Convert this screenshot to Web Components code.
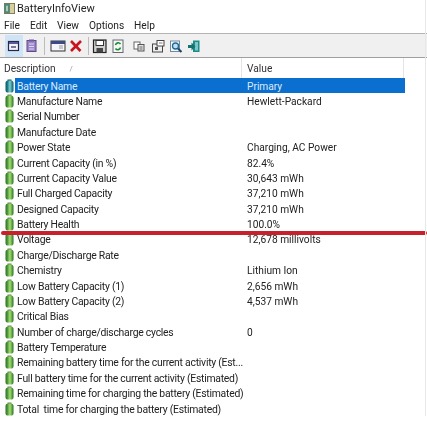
<!DOCTYPE html>
<html><head><meta charset="utf-8"><style>
html,body{margin:0;padding:0;background:#fff}
body{width:427px;height:423px;overflow:hidden;font-family:Roboto,"Noto Sans",sans-serif;font-size:10px;color:#222}
</style></head><body>
<app-window></app-window>
<script>
const svgIcons={
 view1:'<rect x="2.5" y="3.5" width="10" height="9" fill="#f2f2fa" stroke="#26264e" stroke-width="1.2"/><rect x="3" y="4" width="9" height="2" fill="#5a5a98"/><path d="M5 9h5" stroke="#26264e" stroke-width="1.2"/>',
 view2:'<rect x="3" y="2.5" width="9" height="11" fill="#9a86c8" stroke="#5b4a8c"/><path d="M5 6h5M5 8.5h5M5 11h5" stroke="#e0d8f0"/><rect x="5" y="1.5" width="5" height="2" fill="#6c5a9e"/>',
 win:'<rect x="1" y="3" width="14" height="10" fill="#f4f4fa" stroke="#333"/><rect x="1" y="3" width="14" height="3" fill="#3b4a86"/><path d="M9 8h4M9 10h4" stroke="#999"/>',
 del:'<path d="M3 3l9.5 10M13 3L3 13" stroke="#c8141c" stroke-width="2.6"/>',
 save:'<rect x="1.5" y="2" width="12.5" height="12.5" fill="#cfcfcf" stroke="#222" stroke-width="1.2"/><rect x="4" y="2.5" width="7.5" height="5" fill="#fff" stroke="#333"/><rect x="4.5" y="10" width="6.5" height="4.5" fill="#444"/>',
 refresh:'<rect x="3" y="2" width="10" height="12.5" fill="#f4f8f0" stroke="#667"/><path d="M5.5 7a2.8 2.8 0 0 1 5-1M10.5 9.5a2.8 2.8 0 0 1-5 1" fill="none" stroke="#1c8a3c" stroke-width="1.6"/>',
 copy:'<rect x="3" y="4" width="6" height="7" fill="#fff" stroke="#666"/><rect x="7" y="6.5" width="6" height="6.5" fill="#e4e4e4" stroke="#555"/><path d="M8.5 9h3M8.5 11h3" stroke="#666"/>',
 props:'<rect x="2.5" y="6" width="10" height="8" fill="#eee" stroke="#444"/><rect x="7" y="2.5" width="7" height="5.5" fill="#fff" stroke="#444"/><rect x="5" y="9" width="3" height="3" fill="#555"/><path d="M9 5h3.5" stroke="#777"/>',
 find:'<rect x="2.5" y="3" width="9" height="10.5" fill="#f2f7fc" stroke="#789"/><circle cx="7.5" cy="8" r="3" fill="#bfe0f4" stroke="#1e6a96" stroke-width="1.3"/><path d="M10 10.5l3.5 3.5" stroke="#17466a" stroke-width="2"/>',
 exit:'<path d="M7 2.5h6.5V14H7z" fill="#1e8a8a"/><path d="M9 4h3v8.5H9z" fill="#7cc8c4"/><path d="M2 7h3.5V4.5l4 4-4 4V10H2z" fill="#157272"/>'
};
const tpl=(css,html)=>{const t=document.createElement('template');t.innerHTML='<style>'+css+'</style>'+html;return t};
const define=(name,t,init)=>customElements.define(name,class extends HTMLElement{connectedCallback(){if(this.shadowRoot)return;const r=this.attachShadow({mode:'open'});r.appendChild(t.content.cloneNode(true));init&&init(this,r)}});

define('title-bar',tpl(`:host{display:flex;align-items:center;gap:2px;height:17px;padding-left:4px;font-size:11px;color:#222}
svg{width:11px;height:11px;display:block}`,
`<svg viewBox="0 0 12 12"><rect width="12" height="12" fill="#7d7a5a"/><rect x="1" y="1" width="4.5" height="10" fill="#3f8f88"/><rect x="6.5" y="1" width="4.5" height="10" fill="#d8cfa0"/><rect x="2.5" y="3" width="1.5" height="6" fill="#dfe8c8"/></svg><span>BatteryInfoView</span>`));

define('menu-bar',tpl(`:host{display:flex;height:16px;align-items:center;font-size:10.2px;color:#222;padding-left:4px}
span{display:block}`,
`<span style="width:26px">File</span><span style="width:27px">Edit</span><span style="width:32px">View</span><span style="width:45px">Options</span><span>Help</span>`));

define('tool-icon',tpl(`:host{display:flex;width:17px;height:22px;align-items:center;justify-content:center;flex:none}
:host([on]){background:#cfe4f6}
svg{width:16px;height:16px;display:block}`,`<svg viewBox="0 0 16 16"></svg>`),(h,r)=>{r.querySelector('svg').innerHTML=svgIcons[h.getAttribute('name')]});

define('tool-bar',tpl(`:host{display:flex;align-items:center;height:23px;background:#f0f0f0;border-top:1px solid #b4b4b4;border-bottom:1px solid #a0a0a0;padding-left:5px}
.sep{width:1px;height:18px;background:#bcbcbc;flex:none}
.gap{width:3px;flex:none}`,
`<tool-icon name="view1" on style="width:18px"></tool-icon><tool-icon name="view2" style="width:18px"></tool-icon><span class="gap"></span><span class="sep"></span><span class="gap" style="width:4px"></span><tool-icon name="win"></tool-icon><tool-icon name="del" style="width:19px"></tool-icon><span class="gap"></span><span class="sep"></span><span class="gap"></span><tool-icon name="save" style="width:16px"></tool-icon><tool-icon name="refresh" style="width:20px"></tool-icon><tool-icon name="copy" style="width:21px"></tool-icon><tool-icon name="props"></tool-icon><tool-icon name="find" style="width:20px"></tool-icon><tool-icon name="exit" style="width:16px"></tool-icon>`));

define('list-header',tpl(`:host{display:grid;grid-template-columns:242px 162px;height:20px;align-items:center;font-size:10.2px;color:#333}
div{height:100%;display:flex;align-items:center;box-sizing:border-box;border-right:1px solid #e4e4e4;padding-left:4px}
div+div{padding-left:5px}
i{font-style:normal;color:#999;margin-left:14px;font-size:8px}`,
`<div>Description<i>/</i></div><div>Value</div>`));

define('list-row',tpl(`:host{display:grid;grid-template-columns:15px 227px 162.5px;height:15.38px;align-items:center;font-size:10.4px;letter-spacing:-.25px;color:#222;white-space:pre}
svg{width:9px;height:14px;margin-left:5px;display:block}
.c{height:100%;display:flex;align-items:center;padding:1px 0 0 2px;box-sizing:border-box}
.v{padding-left:5px;letter-spacing:0;font-size:10.2px}
:host([sel]) .c{background:#0a6fce;color:#dcecfb}`,
`<svg viewBox="0 0 9 14"><defs><linearGradient id="g"><stop offset="0" stop-color="#2f6a28"/><stop offset=".25" stop-color="#4f9a38"/><stop offset=".55" stop-color="#a4dc78"/><stop offset=".8" stop-color="#5da83e"/><stop offset="1" stop-color="#2f6a28"/></linearGradient></defs><rect x="2.5" y=".5" width="4" height="2" fill="#6a8a58"/><rect x=".5" y="1.5" width="8" height="12" rx="2.6" fill="url(#g)"/></svg><div class="c"><slot></slot></div><div class="c v"><slot name="value"></slot></div>`),(h,r)=>{
 if(h.hasAttribute('sel')){const s=r.querySelectorAll('stop');['#14555e','#1c7d86','#86cfd0','#2a8f96','#14555e'].forEach((c,i)=>s[i].setAttribute('stop-color',c));r.querySelector('svg rect').setAttribute('fill','#14555e')}
});

define('app-window',tpl(`:host{display:block;position:relative;width:427px;height:423px;overflow:hidden;background:#fff}
.all{filter:blur(.3px)}
.rule{position:absolute;left:1px;right:0;top:231px;height:4px;background:#c8202c;border-radius:2px}
.edge{position:absolute;top:0;bottom:0;right:1px;width:1px;background:#e8e8e8}`,
`<div class="all"><title-bar></title-bar><menu-bar></menu-bar><tool-bar></tool-bar><list-header></list-header>
<div class="rows"></div><div class="rule"></div><div class="edge"></div></div>`),(h,r)=>{
 const rows=[['Battery Name','Primary'],['Manufacture Name','Hewlett-Packard'],['Serial Number',''],['Manufacture Date',''],['Power State','Charging, AC Power'],['Current Capacity (in %)','82.4%'],['Current Capacity Value','30,643 mWh'],['Full Charged Capacity','37,210 mWh'],['Designed Capacity','37,210 mWh'],['Battery Health','100.0%'],['Voltage','12,678 millivolts'],['Charge/Discharge Rate',''],['Chemistry','Lithium Ion'],['Low Battery Capacity (1)','2,656 mWh'],['Low Battery Capacity (2)','4,537 mWh'],['Critical Bias',''],['Number of charge/discharge cycles','0'],['Battery Temperature',''],['Remaining battery time for the current activity (Est...',''],['Full battery time for the current activity (Estimated)',''],['Remaining time for charging the battery (Estimated)',''],['Total  time for charging the battery (Estimated)','']];
 const box=r.querySelector('.rows');
 rows.forEach((x,i)=>{const e=document.createElement('list-row');if(i==0)e.setAttribute('sel','');e.append(x[0]);const v=document.createElement('span');v.slot='value';v.textContent=x[1];e.append(v);box.append(e)});
});
</script></body></html>
